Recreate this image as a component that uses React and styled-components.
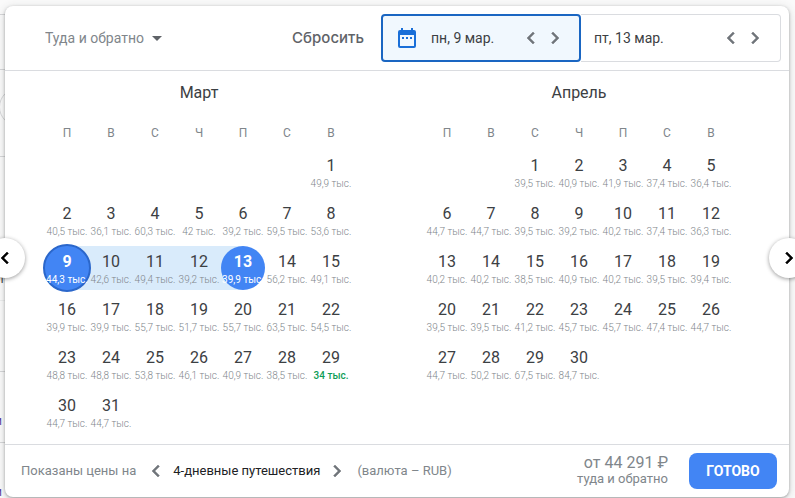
import React from 'react';
import styled, { createGlobalStyle, css } from 'styled-components';

const GlobalStyle = createGlobalStyle`
  * {
    box-sizing: border-box;
  }
  body {
    margin: 0;
    overflow: hidden;
    background: #fafafa;
    font-family: Roboto, 'Liberation Sans', sans-serif;
    color: #3c4043;
  }
  button, input, select {
    font-family: inherit;
    color: inherit;
  }
`;

const Page = styled.div`
  position: relative;
  padding: 6px 6px 1px 5px;
  overflow: hidden;
`;

const Backdrop = styled.div`
  position: absolute;
  inset: 0 auto 0 0;
  width: 40px;
`;

const BackdropRow = styled.div`
  display: flex;
  align-items: flex-end;
  height: ${props => props.$height}px;
  border-bottom: 1px solid ${props => (props.$faint ? '#eceded' : '#d5d6d8')};
`;

const BackdropChip = styled.div`
  flex: none;
  width: 38px;
  height: 38px;
  margin: 0 0 30px -1px;
  border: 1px solid #d5d6d8;
  border-radius: 50%;
`;

const BackdropText = styled.span`
  display: flex;
  justify-content: flex-end;
  width: ${props => (props.$link ? 2 : 5)}px;
  margin-bottom: 13px;
  overflow: hidden;
  color: ${props => (props.$link ? '#5b3fa0' : '#3c4043')};
  font-size: 12px;
  line-height: 16px;
`;

const Dialog = styled.section`
  position: relative;
  background: white;
  border-radius: 8px;
  box-shadow: 0 1px 3px rgba(60, 64, 67, 0.4), 0 2px 10px rgba(60, 64, 67, 0.2);
`;

const Header = styled.header`
  display: flex;
  align-items: center;
  padding: 8px 8px 8px 40px;
  border-bottom: 1px solid #dadce0;
`;

const TripType = styled.label`
  display: flex;
  align-items: center;
  gap: 8px;
  color: #5f6368;
`;

const TripSelect = styled.select`
  appearance: none;
  padding: 0;
  border: 0;
  background: none;
  color: #80868b;
  font-size: 14px;
  line-height: 20px;
`;

const Reset = styled.button`
  margin-left: auto;
  margin-right: 17px;
  padding: 0;
  border: 0;
  background: none;
  color: #5f6368;
  font-family: Inter, sans-serif;
  font-size: 15px;
  font-weight: 500;
  line-height: 20px;
`;

const DateField = styled.div`
  display: flex;
  align-items: center;
  width: 200px;
  height: 48px;
  padding: 0 13px;
  border: 1px solid #dadce0;
  border-left-width: 0;
  border-radius: 0 4px 4px 0;

  ${props =>
    props.$active &&
    css`
      padding: 0 12px 0 14px;
      border: 2px solid #1a66c2;
      border-radius: 4px;
      background: #f1f8fe;
    `}
`;

const DateInput = styled.input`
  flex: 1;
  min-width: 0;
  padding: 0;
  border: 0;
  outline: 0;
  background: none;
  font-size: 14px;
  line-height: 20px;
`;

const CalendarMark = styled.svg`
  flex: none;
  margin-right: 14px;
`;

const IconButton = styled.button`
  display: flex;
  align-items: center;
  justify-content: center;
  width: 24px;
  height: 24px;
  padding: 0;
  border: 0;
  background: none;
  color: #70757a;
`;

const Months = styled.div`
  display: flex;
  justify-content: space-between;
  padding: 10px 56px 8px 40px;
`;

const MonthTable = styled.table`
  width: 308px;
  height: 1px;
  table-layout: fixed;
  border-collapse: collapse;
  align-self: flex-start;
`;

const MonthName = styled.caption`
  padding-bottom: 16px;
  font-size: 16px;
  line-height: 24px;
`;

const Weekday = styled.th`
  padding: 0 0 3px;
  color: #80868b;
  font-size: 12px;
  font-weight: 400;
  line-height: 24px;
`;

const DayCell = styled.td`
  height: 48px;
  padding: 0;
  ${props =>
    props.$band &&
    css`
      background: linear-gradient(#d9ebfb, #d9ebfb) ${props.$band} center /
        ${props.$band === 'center' ? '100%' : '50%'} 44px no-repeat;
    `}
`;

const Day = styled.button`
  display: flex;
  flex-direction: column;
  align-items: center;
  width: 44px;
  height: 44px;
  margin: 2px 0;
  padding: 4px 0 0;
  border: 0;
  border-radius: 50%;
  background: none;
  font-size: 16px;
  line-height: 24px;

  ${props =>
    props.$picked &&
    css`
      background: #4285f4;
      color: white;
      font-weight: 700;
    `}

  ${props =>
    props.$focused &&
    css`
      position: relative;
      width: 48px;
      height: 48px;
      margin: 0 -2px;
      border: 2px solid #2b67cb;
    `}
`;

const Price = styled.span`
  color: ${props => (props.$low ? '#0f9d58' : '#80868b')};
  font-size: 10px;
  font-weight: ${props => (props.$low ? 500 : 300)};
  line-height: 12px;
  white-space: nowrap;
  ${props => props.$picked && 'color: white; font-weight: 400;'}
`;

const Footer = styled.footer`
  display: flex;
  align-items: center;
  height: 53px;
  padding: 0 12px 0 16px;
  border-top: 1px solid #dadce0;
  color: #80868b;
  font-size: 13px;
  line-height: 16px;
`;

const Stepper = styled.div`
  display: flex;
  align-items: center;
  gap: 5px;
  margin: 0 8px;
  color: #202124;
`;

const Total = styled.div`
  margin-left: auto;
  margin-right: 21px;
  text-align: right;
`;

const TotalPrice = styled.div`
  font-size: 16px;
`;

const Done = styled.button`
  width: 88px;
  height: 36px;
  padding: 0;
  border: 0;
  border-radius: 8px;
  background: #4285f4;
  color: white;
  font-size: 14px;
  font-weight: 700;
`;

const PageButton = styled.button`
  position: absolute;
  top: 232px;
  ${props => props.$side}: -20px;
  display: flex;
  align-items: center;
  justify-content: center;
  width: 40px;
  height: 40px;
  padding: 0;
  border: 0;
  border-radius: 50%;
  background: white;
  color: black;
  box-shadow: 0 1px 4px rgba(0, 0, 0, 0.4);
`;

const Chevron = ({ right }) => (
  <svg
    width='24'
    height='24'
    viewBox='0 0 24 24'
    fill='currentColor'
    stroke='currentColor'
    strokeWidth='0.5'
  >
    <path
      d={
        right
          ? 'M8.59 16.59L13.17 12 8.59 7.41 10 6l6 6-6 6z'
          : 'M15.41 7.41L14 6l-6 6 6 6 1.41-1.41L10.83 12z'
      }
    />
  </svg>
);

const weekdays = ['П', 'В', 'С', 'Ч', 'П', 'С', 'В'];

const march = {
  name: 'Март',
  offset: 6,
  start: 9,
  end: 13,
  low: 29,
  prices: [
    '49,9', '40,5', '36,1', '60,3', '42', '39,2', '59,5', '53,6',
    '44,3', '42,6', '49,4', '39,2', '39,9', '56,2', '49,1',
    '39,9', '39,9', '55,7', '51,7', '55,7', '63,5', '54,5',
    '48,8', '48,8', '53,8', '46,1', '40,9', '38,5', '34',
    '44,7', '44,7'
  ]
};

const april = {
  name: 'Апрель',
  offset: 2,
  prices: [
    '39,5', '40,9', '41,9', '37,4', '36,4',
    '44,7', '44,7', '39,5', '39,2', '40,2', '37,4', '36,3',
    '40,2', '40,2', '38,5', '40,9', '40,2', '39,5', '39,4',
    '39,5', '39,5', '41,2', '45,7', '45,7', '47,4', '44,7',
    '44,7', '50,2', '67,5', '84,7'
  ]
};

const getBand = (day, start, end) => {
  if (day === start) return 'right';
  if (day === end) return 'left';
  return day > start && day < end ? 'center' : undefined;
};

const getWeeks = ({ offset, prices }) => {
  const cells = [...Array(offset).fill(null), ...prices.map((_, i) => i + 1)];
  const weeks = [];
  for (let i = 0; i < cells.length; i += 7) weeks.push(cells.slice(i, i + 7));
  return weeks;
};

const Month = ({ month }) => (
  <MonthTable>
    <MonthName>{month.name}</MonthName>
    <thead>
      <tr>
        {weekdays.map((day, i) => (
          <Weekday key={i} scope='col'>
            {day}
          </Weekday>
        ))}
      </tr>
    </thead>
    <tbody>
      {getWeeks(month).map((week, w) => (
        <tr key={w}>
          {week.map((day, i) => {
            if (!day) return <DayCell key={i} />;
            const picked = day === month.start || day === month.end;
            return (
              <DayCell key={i} $band={getBand(day, month.start, month.end)}>
                <Day $picked={picked} $focused={day === month.start}>
                  {day}
                  <Price $picked={picked} $low={day === month.low}>
                    {month.prices[day - 1]} тыс.
                  </Price>
                </Day>
              </DayCell>
            );
          })}
        </tr>
      ))}
    </tbody>
  </MonthTable>
);

const DateSteps = () => (
  <>
    <IconButton aria-label='Предыдущий день'>
      <Chevron />
    </IconButton>
    <IconButton aria-label='Следующий день'>
      <Chevron right />
    </IconButton>
  </>
);

const App = () => (
  <>
    <GlobalStyle />
    <Page>
      <Backdrop aria-hidden='true'>
        <BackdropRow $height={15} />
        <BackdropRow $height={55} />
        <BackdropRow $height={87}>
          <BackdropChip />
        </BackdropRow>
        <BackdropRow $height={144} $faint>
          <BackdropText>ит</BackdropText>
        </BackdropRow>
        <BackdropRow $height={71} />
        <BackdropRow $height={71}>
          <BackdropText $link>и</BackdropText>
        </BackdropRow>
        <BackdropRow $height={71}>
          <BackdropText $link>и</BackdropText>
        </BackdropRow>
      </Backdrop>
      <Dialog>
        <Header>
          <TripType>
            <TripSelect aria-label='Тип поездки'>
              <option>Туда и обратно</option>
            </TripSelect>
            <svg width='10' height='5' viewBox='0 0 10 5' fill='currentColor'>
              <path d='M0 0h10L5 5z' />
            </svg>
          </TripType>
          <Reset>Сбросить</Reset>
          <DateField $active>
            <CalendarMark width='20' height='20' viewBox='0 0 20 20'>
              <path
                fill='#1a6fd8'
                fillRule='evenodd'
                d='M4 0h2v2h8V0h2v2h1a2 2 0 0 1 2 2v14a2 2 0 0 1-2 2H3a2 2 0 0 1-2-2V4a2 2 0 0 1 2-2h1zM3 7v11h14V7zM5 9h2v2H5zM9 9h2v2H9zM13 9h2v2h-2z'
              />
            </CalendarMark>
            <DateInput aria-label='Туда' defaultValue='пн, 9 мар.' />
            <DateSteps />
          </DateField>
          <DateField>
            <DateInput aria-label='Обратно' defaultValue='пт, 13 мар.' />
            <DateSteps />
          </DateField>
        </Header>
        <Months>
          <Month month={march} />
          <Month month={april} />
        </Months>
        <Footer>
          Показаны цены на
          <Stepper>
            <IconButton aria-label='Короче'>
              <Chevron />
            </IconButton>
            4-дневные путешествия
            <IconButton aria-label='Дольше'>
              <Chevron right />
            </IconButton>
          </Stepper>
          (валюта – RUB)
          <Total>
            <TotalPrice>от 44 291 ₽</TotalPrice>
            туда и обратно
          </Total>
          <Done>ГОТОВО</Done>
        </Footer>
        <PageButton $side='left' aria-label='Назад'>
          <Chevron />
        </PageButton>
        <PageButton $side='right' aria-label='Вперёд'>
          <Chevron right />
        </PageButton>
      </Dialog>
    </Page>
  </>
);

export default App;
